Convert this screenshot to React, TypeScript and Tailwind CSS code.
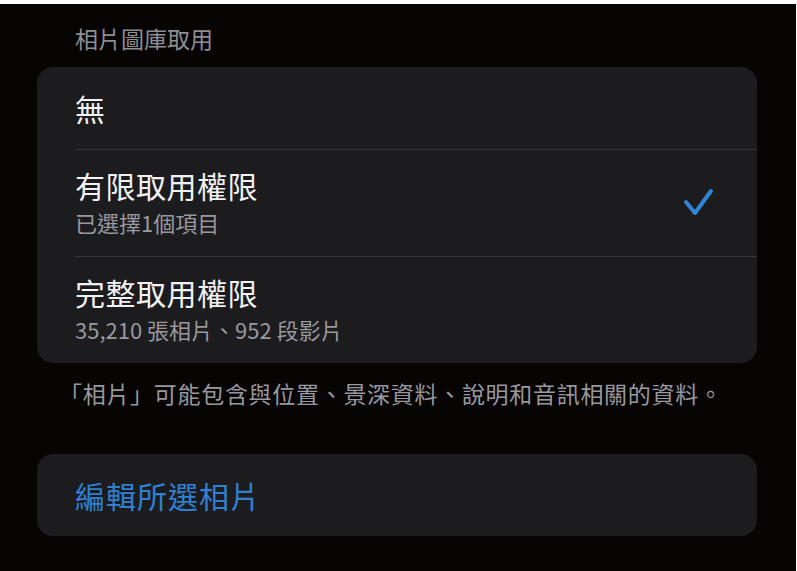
const font = { fontFamily: '"Noto Sans CJK TC", "Noto Sans", sans-serif' };

function Check() {
  return (
    <svg width="32" height="30" viewBox="0 0 32 30" fill="none" className="shrink-0">
      <polyline
        points="3,14 12,25 28,3"
        stroke="#2f84d6"
        strokeWidth="4"
        strokeLinecap="round"
        strokeLinejoin="round"
      />
    </svg>
  );
}

function OptionRow({
  title,
  subtitle,
  checked,
}: {
  title: string;
  subtitle: string;
  checked?: boolean;
}) {
  return (
    <div className="pl-[38px]">
      <div className="flex h-[107px] items-center border-t border-[#36363a] pr-[42px]">
        <div className="flex flex-1 flex-col pb-[4px]">
          <span className="text-[30px] leading-[34px] tracking-[0.5px] text-[#f2f2f4]">{title}</span>
          <span className="mt-[7px] text-[22px] leading-[26px] text-[#98989e]">{subtitle}</span>
        </div>
        {checked && <Check />}
      </div>
    </div>
  );
}

export default function App() {
  return (
    <div className="min-h-screen bg-white pt-1 pr-px" style={font}>
      <div className="h-[567px] bg-[#070404] pl-[37px] pr-[39px] pt-[19px]">
        <p className="pl-[38px] text-[23px] leading-[30px] text-[#8e8e93]">相片圖庫取用</p>

        <div className="mt-[14px] overflow-hidden rounded-[16px] bg-[#1c1c1f]">
          <div className="flex h-[82px] items-center pl-[38px]">
            <span className="text-[30px] leading-[34px] text-[#f2f2f4]">無</span>
          </div>
          <OptionRow title="有限取用權限" subtitle="已選擇1個項目" checked />
          <OptionRow title="完整取用權限" subtitle="35,210 張相片、952 段影片" />
        </div>

        <p className="mt-[15px] pl-[22px] text-[23px] leading-[30px] tracking-[0.7px] text-[#98989e]">
          「相片」可能包含與位置、景深資料、說明和音訊相關的資料。
        </p>

        <div className="mt-[46px] flex h-[82px] items-center rounded-[16px] bg-[#1c1c1f] pl-[38px]">
          <span className="text-[30px] leading-[34px] tracking-[1px] text-[#2f80d4]">編輯所選相片</span>
        </div>
      </div>
    </div>
  );
}
